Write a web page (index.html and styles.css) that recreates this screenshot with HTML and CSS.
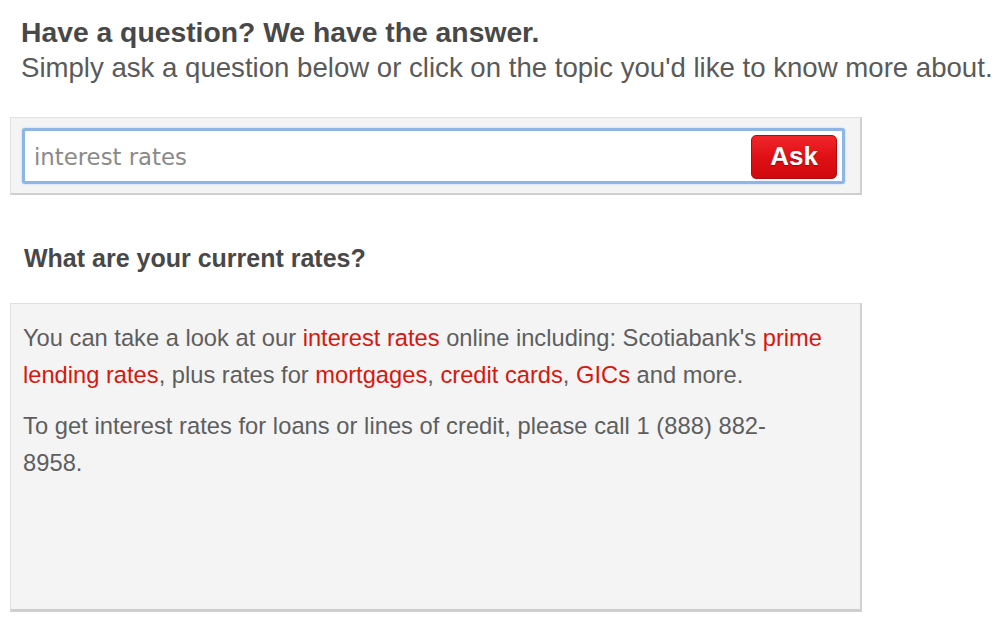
FILE: index.html
```html
<!DOCTYPE html>
<html>
<head>
<meta charset="utf-8">
<link rel="stylesheet" href="styles.css">
</head>
<body>
<div class="page">
  <div class="intro">
    <h1 class="title">Have a question? We have the answer.</h1>
    <p class="subtitle">Simply ask a question below or click on the topic you'd like to know more about.</p>
  </div>
  <div class="search-panel">
    <div class="search-field">
      <span class="query">interest rates</span>
      <button class="ask">Ask</button>
    </div>
  </div>
  <h2 class="question">What are your current rates?</h2>
  <div class="answer">
    <p>You can take a look at our <a href="#">interest rates</a> online including: Scotiabank's <a href="#">prime lending rates</a>, plus rates for <a href="#">mortgages</a>, <a href="#">credit cards</a>, <a href="#">GICs</a> and more.</p>
    <p class="call">To get interest rates for loans or lines of credit, please call 1 (888) 882-8958.</p>
  </div>
</div>
</body>
</html>
```
FILE: styles.css
```css
html, body {
  margin: 0;
  padding: 0;
  background: #ffffff;
}
.page {
  padding: 15px 10px 0 10px;
  font-family: "Liberation Sans", Arial, sans-serif;
  color: #555555;
  width: 852px;
}
.intro {
  padding-left: 11px;
  width: 990px;
}
.title {
  margin: 0;
  font-size: 28.3px;
  line-height: 35px;
  font-weight: bold;
  color: #484848;
}
.subtitle {
  margin: 0;
  font-size: 27.6px;
  line-height: 35px;
  color: #5a5a5a;
  white-space: nowrap;
}
.search-panel {
  margin-top: 32px;
  height: 78px;
  box-sizing: border-box;
  background: #f4f4f4;
  border: 1px solid #e2e2e2;
  border-right: 2px solid #d0d0d0;
  border-bottom: 2px solid #cfcfcf;
  padding: 10px 15px 0 11px;
}
.search-field {
  height: 56px;
  box-sizing: border-box;
  background: #ffffff;
  border: 3px solid #8db6e6;
  border-radius: 3px;
  box-shadow: 0 0 2px #a9c8ee;
  display: flex;
  align-items: center;
  justify-content: space-between;
  padding: 0 5px 0 9px;
}
.query {
  font-family: "DejaVu Sans", sans-serif;
  font-size: 22.8px;
  color: #8a8a8a;
  padding-top: 2px;
}
.ask {
  width: 86px;
  height: 44px;
  border: 1px solid #b50a0c;
  border-radius: 5px;
  background: linear-gradient(#f0262a, #e01015 50%, #cf090e);
  color: #ffffff;
  font-family: "Liberation Sans", Arial, sans-serif;
  font-weight: bold;
  font-size: 26px;
  text-shadow: 0 1px 1px rgba(0,0,0,0.35);
  padding: 0;
  margin-top: 1px;
}
.question {
  margin: 48px 0 0 14px;
  font-size: 25px;
  line-height: 30px;
  font-weight: bold;
  color: #484848;
}
.answer {
  margin-top: 30px;
  height: 309px;
  box-sizing: border-box;
  background: #f4f4f4;
  border: 1px solid #e0e0e0;
  border-right: 2px solid #d2d2d2;
  border-bottom: 3px solid #cfcfcf;
  padding: 16px 37px 0 12px;
}
.answer p {
  margin: 0 0 14px 0;
  font-size: 23.7px;
  line-height: 37px;
  color: #5e5e5e;
}
.answer .call {
  letter-spacing: 0.04px;
}
.answer a {
  color: #d8170e;
  text-decoration: none;
}
```
